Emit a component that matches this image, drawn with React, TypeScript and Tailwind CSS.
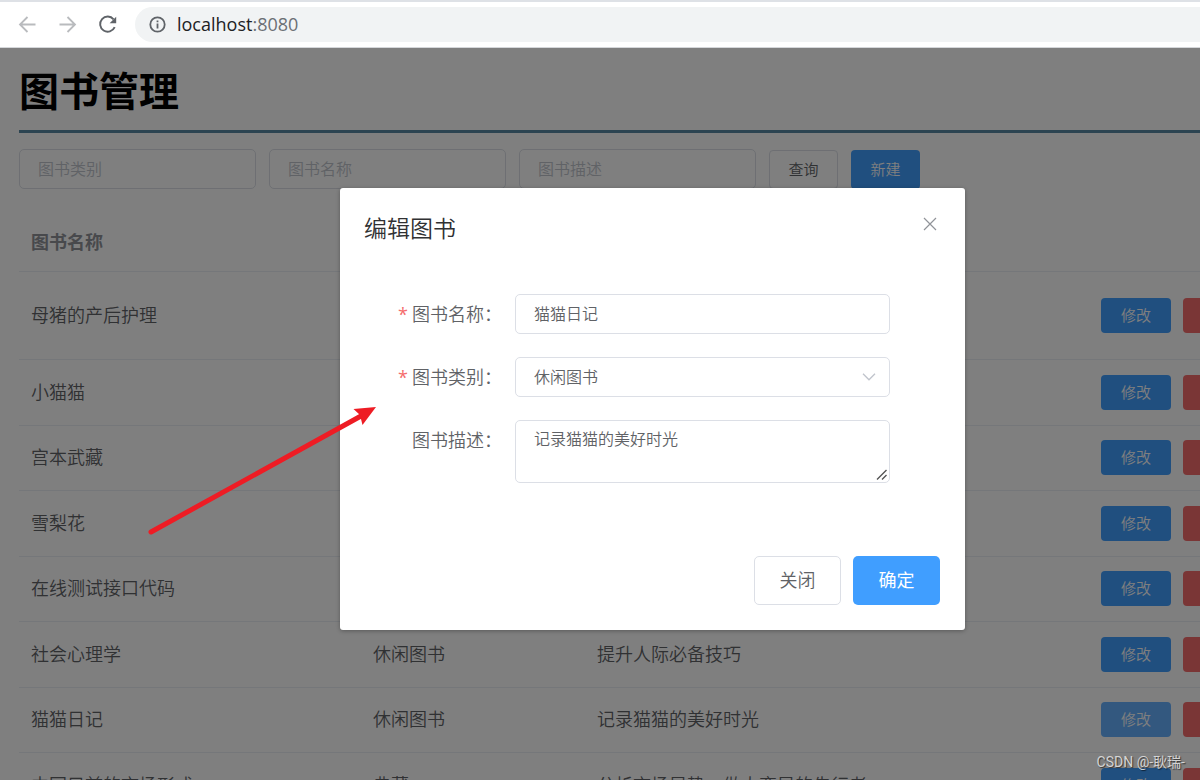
import { useState } from "react";

type Book = { name: string; kind: string; description: string; focused?: boolean };

const books: Book[] = [
  { name: "母猪的产后护理", kind: "养殖图书", description: "母猪产后的护理方法" },
  { name: "小猫猫", kind: "休闲图书", description: "小猫猫的故事" },
  { name: "宫本武藏", kind: "休闲图书", description: "宫本武藏的一生" },
  { name: "雪梨花", kind: "休闲图书", description: "雪梨花的故事" },
  { name: "在线测试接口代码", kind: "休闲图书", description: "在线测试接口代码" },
  { name: "社会心理学", kind: "休闲图书", description: "提升人际必备技巧" },
  { name: "猫猫日记", kind: "休闲图书", description: "记录猫猫的美好时光", focused: true },
  { name: "中国目前的市场形式", kind: "典藏", description: "分析市场局势，做大变局的先行者" },
];

function AddressBar() {
  return (
    <header className="flex h-12 shrink-0 items-center border-t-2 border-b border-t-[#dee1e6] border-b-[#d5d7da] bg-white pl-4 font-[Open_Sans,Noto_Sans_CJK_SC,sans-serif]">
      <button type="button" aria-label="后退" className="flex size-6 items-center justify-center text-[#b9bbbe]">
        <svg viewBox="0 0 24 24" className="size-6" fill="none" stroke="currentColor" strokeWidth="1.8">
          <path d="M19.500 11.500H4.500M11.500 4 4 11.500l7.500 7.500" />
        </svg>
      </button>
      <button type="button" aria-label="前进" className="ml-4 flex size-6 items-center justify-center text-[#b9bbbe]">
        <svg viewBox="0 0 24 24" className="size-6" fill="none" stroke="currentColor" strokeWidth="1.8">
          <path d="M3.500 11.500H19M11.500 4 19 11.500l-7.500 7.500" />
        </svg>
      </button>
      <button type="button" aria-label="重新加载" className="ml-4 flex size-6 items-center justify-center text-[#5f6368]">
        <svg viewBox="0 0 24 24" className="size-6" fill="none">
          <path d="M17.600 6.300A7.600 7.600 0 1 0 18.700 14.200" stroke="currentColor" strokeWidth="1.9" />
          <path d="M20.200 3.700v6.600h-6.600z" fill="currentColor" />
        </svg>
      </button>
      <div className="ml-[15px] flex h-[35px] flex-1 items-center rounded-l-full bg-[#f1f3f4] pl-3.5">
        <svg viewBox="0 0 18 18" className="size-[18px] text-[#5f6368]" fill="none" stroke="currentColor" strokeWidth="1.8">
          <circle cx="8.500" cy="8.500" r="7.200" />
          <path d="M8.500 7.600v4.900M8.500 4.500v1.800" />
        </svg>
        <span className="ml-[10px] pb-0.5 text-[18px] leading-6 text-[#202124]">
          localhost<span className="text-[#6b6f74]">:8080</span>
        </span>
      </div>
    </header>
  );
}

function BookPage() {
  const field =
    "h-10 w-[237px] rounded-[5px] border border-[#dcdfe6] bg-white px-[18px] pb-0.5 text-[16px] text-[#606266] placeholder:text-[#c0c4cc]";
  return (
    <main className="min-w-[1305px] px-[19px] pt-[11px]">
      <h1 className="text-[40px] leading-[60px] font-bold text-black">图书管理</h1>
      <div className="mt-[11px] h-[3px] bg-[#5888a2]" />
      <div className="mt-4 flex items-center gap-[13px]">
        <input aria-label="图书类别" placeholder="图书类别" className={field} />
        <input aria-label="图书名称" placeholder="图书名称" className={field} />
        <input aria-label="图书描述" placeholder="图书描述" className={field} />
        <button type="button" className="h-[39px] w-[69px] rounded border border-[#dcdfe6] text-[15px] text-[#606266]">
          查询
        </button>
        <button type="button" className="h-[39px] w-[69px] rounded bg-[#409eff] text-[15px] text-white">
          新建
        </button>
      </div>
      <table className="mt-[23px] w-full table-fixed border-collapse text-left text-[18px] text-[#606266]">
        <thead>
          <tr className="h-[59px] border-b border-[#ebeef5] text-[#909399]">
            <th className="w-[342px] px-3 font-bold">图书名称</th>
            <th className="w-[224px] px-3 font-bold">图书类别</th>
            <th className="px-3 font-bold">图书描述</th>
            <th className="w-[197px] px-3" aria-label="操作" />
          </tr>
        </thead>
        <tbody>
          {books.map((book) => (
            <tr key={book.name} className="h-[65px] border-b border-[#ebeef5] first:h-[88px] even:h-[66px]">
              <td className="px-3 pb-0.5">{book.name}</td>
              <td className="px-3 pb-0.5">{book.kind}</td>
              <td className="px-3 pb-0.5">{book.description}</td>
              <td className="px-3">
                <div className="flex gap-3 text-[15px] text-white">
                  <button
                    type="button"
                    className={`h-[35px] w-[70px] shrink-0 rounded ${book.focused ? "bg-[#66b1ff]" : "bg-[#409eff]"}`}
                  >
                    修改
                  </button>
                  <button type="button" className="h-[35px] w-[70px] shrink-0 rounded bg-[#f56c6c]">
                    删除
                  </button>
                </div>
              </td>
            </tr>
          ))}
        </tbody>
      </table>
    </main>
  );
}

function EditDialog() {
  const [name, setName] = useState("猫猫日记");
  const [kind, setKind] = useState("休闲图书");
  const [description, setDescription] = useState("记录猫猫的美好时光");
  const label = "w-[150px] shrink-0 pr-[13px] text-right text-[18px] leading-[38px]";
  const star = "mr-1 font-[Open_Sans,sans-serif] font-normal text-[#f56c6c]";
  const control = "block w-full rounded-[5px] border border-[#dcdfe6] bg-white px-[18px] text-[16px] text-[#606266]";
  return (
    <section
      role="dialog"
      aria-labelledby="dialog-title"
      className="mx-auto mt-[140px] w-[625px] rounded-[3px] bg-white text-[#606266] shadow-[0_1px_4px_rgba(0,0,0,0.3)]"
    >
      <div className="flex items-start justify-between px-6 pt-[23px]">
        <h2 id="dialog-title" className="text-[23px] leading-8 text-[#303133]">
          编辑图书
        </h2>
        <button type="button" aria-label="关闭对话框" className="mt-0.5 flex size-[22px] items-center justify-center text-[#909399]">
          <svg viewBox="0 0 14 14" className="size-3.5" fill="none" stroke="currentColor" strokeWidth="1.2">
            <path d="m1 1 12 12M13 1 1 13" />
          </svg>
        </button>
      </div>
      <form className="mt-[51px] flex flex-col gap-[23px] pr-[75px] pl-[25px]">
        <div className="flex">
          <label htmlFor="book-name" className={label}>
            <span className={star}>*</span>图书名称：
          </label>
          <input
            id="book-name"
            value={name}
            onChange={(e) => setName(e.target.value)}
            className={`h-10 pb-0.5 ${control}`}
          />
        </div>
        <div className="flex">
          <label htmlFor="book-kind" className={label}>
            <span className={star}>*</span>图书类别：
          </label>
          <div className="relative flex-1">
            <select
              id="book-kind"
              value={kind}
              onChange={(e) => setKind(e.target.value)}
              className={`h-10 appearance-none pb-0.5 ${control}`}
            >
              <option>休闲图书</option>
              <option>典藏</option>
            </select>
            <svg
              viewBox="0 0 14 8"
              className="pointer-events-none absolute top-4 right-3.5 h-2 w-3.5"
              fill="none"
              stroke="#c0c4cc"
              strokeWidth="1.3"
            >
              <path d="m1 .8 6 6 6-6" />
            </svg>
          </div>
        </div>
        <div className="flex">
          <label htmlFor="book-description" className={label}>
            图书描述：
          </label>
          <div className="relative flex-1">
            <textarea
              id="book-description"
              value={description}
              onChange={(e) => setDescription(e.target.value)}
              className={`h-[63px] resize-y py-[5px] leading-6 ${control}`}
            />
            <svg
              viewBox="0 0 12 12"
              className="pointer-events-none absolute right-0.5 bottom-0.5 size-3 bg-white"
              fill="none"
              stroke="#555"
              strokeWidth="1.4"
            >
              <path d="M1 10.500 10.500 1M6 10.500l4.500-4.500" />
            </svg>
          </div>
        </div>
      </form>
      <div className="mt-[73px] flex justify-end gap-3 px-[25px] pb-[25px] text-[18px]">
        <button type="button" className="h-[49px] w-[87px] rounded-[5px] border border-[#dcdfe6] pb-0.5">
          关闭
        </button>
        <button type="button" className="h-[49px] w-[87px] rounded-[5px] bg-[#409eff] pb-0.5 font-normal text-white">
          确定
        </button>
      </div>
    </section>
  );
}

export default function App() {
  return (
    <div className="flex h-screen flex-col overflow-hidden bg-white">
      <AddressBar />
      <div className="relative flex-1 overflow-hidden font-[Noto_Sans_CJK_SC,sans-serif] font-[350]">
        <BookPage />
        <div className="absolute inset-y-0 left-0 w-full min-w-[1305px] bg-black/50">
          <EditDialog />
        </div>
        <svg viewBox="0 0 230 130" className="pointer-events-none absolute top-[357px] left-[147px] h-[130px] w-[230px]">
          <path d="M4 127 214 11" stroke="#ee1c24" strokeWidth="5" strokeLinecap="round" />
          <path d="M229 2 206.500 4l6.500 6 2.500 10z" fill="#ee1c24" />
        </svg>
        <p className="absolute right-[15px] bottom-2 font-[Roboto,Noto_Sans_CJK_SC,sans-serif] text-[14px] leading-5 font-normal text-[#d4d4d4] [text-shadow:1px_1px_1px_rgba(0,0,0,0.6)]">
          CSDN @-耿瑞-
        </p>
      </div>
    </div>
  );
}
